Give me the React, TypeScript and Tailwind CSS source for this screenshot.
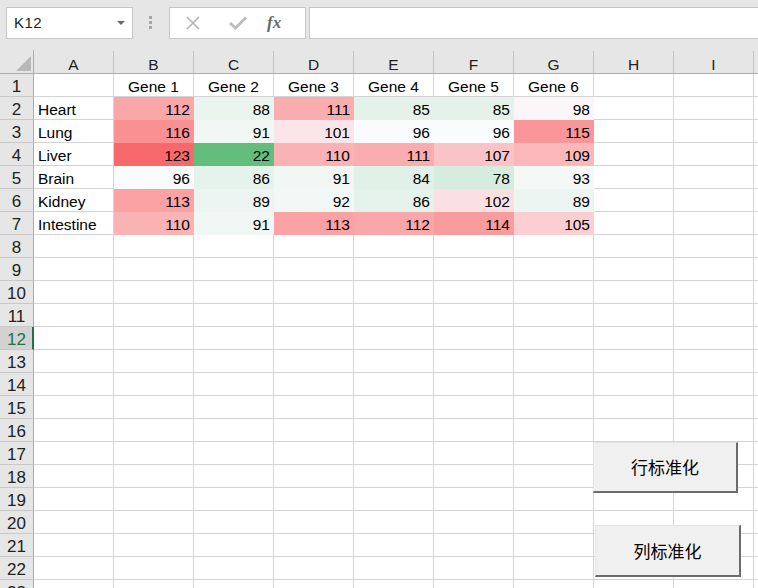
import React from 'react';

const COLS = ['A', 'B', 'C', 'D', 'E', 'F', 'G', 'H', 'I', 'J'];

const DATA: [string, number[]][] = [
  ['Heart', [112, 88, 111, 85, 85, 98]],
  ['Lung', [116, 91, 101, 96, 96, 115]],
  ['Liver', [123, 22, 110, 111, 107, 109]],
  ['Brain', [96, 86, 91, 84, 78, 93]],
  ['Kidney', [113, 89, 92, 86, 102, 89]],
  ['Intestine', [110, 91, 113, 112, 114, 105]],
];

// Excel green-white-red 3-colour scale (min / 50th percentile / max)
const MIN = 22;
const MID = 97;
const MAX = 123;
const GREEN = [99, 190, 123];
const WHITE = [252, 252, 255];
const RED = [248, 105, 107];

function heat(v: number) {
  let to = WHITE;
  let t = 0;
  if (v >= MID) {
    to = RED;
    t = (v - MID) / (MAX - MID);
  } else {
    to = GREEN;
    t = (MID - v) / (MID - MIN);
  }
  const c = WHITE.map((w, i) => Math.round(w + (to[i] - w) * t));
  return `rgb(${c[0]}, ${c[1]}, ${c[2]})`;
}

function Cell({
  children,
  align = 'left',
  fill,
}: {
  children?: React.ReactNode;
  align?: 'left' | 'right' | 'center';
  fill?: string;
}) {
  const justify =
    align === 'right' ? 'justify-end pr-[3px]' : align === 'center' ? 'justify-center' : 'justify-start pl-[4px]';
  return (
    <div
      className={`flex h-[23px] w-[80px] shrink-0 items-end border-r border-b border-[#d4d4d4] text-[15.5px] leading-[19px] text-black ${justify}`}
      style={fill ? { backgroundColor: fill, borderColor: fill } : undefined}
    >
      {children}
    </div>
  );
}

function RowHead({ n, active }: { n: number; active?: boolean }) {
  return (
    <div
      className={`flex h-[23px] w-[34px] shrink-0 items-end justify-center border-b border-[#c8c8c8] text-[17px] leading-[18px] ${
        active
          ? 'border-r-2 border-r-[#217346] bg-[#d2d2d2] pl-[1px] text-[#217346]'
          : 'border-r border-r-[#ababab] bg-[#e6e6e6] text-[#222]'
      }`}
    >
      {n}
    </div>
  );
}

function FormulaBar() {
  return (
    <div className="flex h-[50px] items-start bg-[#e6e6e6] pt-[7px]">
      <div className="ml-[6px] flex h-[32px] w-[127px] items-center justify-between border border-[#c6c6c6] bg-white pl-[7px] pr-[7px]">
        <span className="text-[15px] tracking-[0.5px] text-[#222]">K12</span>
        <span className="h-0 w-0 border-x-[4px] border-t-[4px] border-x-transparent border-t-[#6b6b6b]" />
      </div>
      <div className="ml-[16px] mt-[9px] flex flex-col gap-[2px]">
        <span className="h-[3px] w-[3px] bg-[#a6a6a6]" />
        <span className="h-[3px] w-[3px] bg-[#a6a6a6]" />
        <span className="h-[3px] w-[3px] bg-[#a6a6a6]" />
      </div>
      <div className="ml-[17px] flex h-[32px] w-[137px] items-center border border-[#c6c6c6] bg-white">
        <svg width="16" height="16" viewBox="0 0 16 16" className="ml-[15px]">
          <path d="M2 2 L14 14 M14 2 L2 14" stroke="#b3b3b3" strokeWidth="1.6" fill="none" />
        </svg>
        <svg width="18" height="14" viewBox="0 0 18 14" className="ml-[28px]">
          <path d="M1 7 L6.5 12 L17 1.5" stroke="#bdbdbd" strokeWidth="3" fill="none" />
        </svg>
        <span className="ml-[20px] font-['Liberation_Serif',serif] text-[17px] font-bold italic text-[#6a6a6a]">
          fx
        </span>
      </div>
      <div className="ml-[3px] h-[32px] flex-1 border border-r-0 border-[#c6c6c6] bg-white" />
    </div>
  );
}

function ColumnHeader() {
  return (
    <div className="flex h-[24px] bg-[#e6e6e6]">
      <div className="relative w-[34px] shrink-0 border-r border-b border-[#ababab]">
        <svg width="15" height="15" viewBox="0 0 15 15" className="absolute left-[16px] top-[6px]">
          <path d="M15 0 L15 15 L0 15 Z" fill="#b8b8b8" />
        </svg>
      </div>
      {COLS.map((c) => (
        <div
          key={c}
          className="flex w-[80px] shrink-0 items-end justify-center border-b border-b-[#ababab] text-[15.5px] leading-[17px] text-[#222]"
        >
          <div className="flex-1 text-center">{c === 'J' ? '' : c}</div>
          <div className="h-[22px] w-px bg-[#c4c4c4]" />
        </div>
      ))}
    </div>
  );
}

function WinButton({ label, className }: { label: string; className: string }) {
  return (
    <button
      className={`absolute flex items-center justify-center border-t border-l border-t-[#e3e3e3] border-l-[#e3e3e3] border-r-2 border-b-2 border-r-[#6b6b6b] border-b-[#6b6b6b] bg-[#f0f0f0] font-['Noto_Sans_CJK_SC',sans-serif] text-[17px] text-black ${className}`}
    >
      {label}
    </button>
  );
}

export default function App() {
  const rows = Array.from({ length: 23 }, (_, i) => i + 1);

  return (
    <div className="relative h-[588px] w-[758px] overflow-hidden bg-white font-['Liberation_Sans','Noto_Sans_CJK_SC',sans-serif]">
      <FormulaBar />
      <ColumnHeader />

      {rows.map((r) => {
        const cells: React.ReactNode[] = [];
        if (r === 1) {
          cells.push(<Cell key="A" />);
          for (let g = 1; g <= 6; g++) {
            cells.push(
              <Cell key={g} align="center">
                Gene {g}
              </Cell>
            );
          }
        } else if (r <= 7) {
          const [name, vals] = DATA[r - 2];
          cells.push(<Cell key="A">{name}</Cell>);
          vals.forEach((v, i) =>
            cells.push(
              <Cell key={i} align="right" fill={heat(v)}>
                {v}
              </Cell>
            )
          );
        } else {
          for (let i = 0; i < 7; i++) cells.push(<Cell key={i} />);
        }
        for (let i = 7; i < COLS.length; i++) cells.push(<Cell key={`e${i}`} />);

        return (
          <div key={r} className="flex">
            <RowHead n={r} active={r === 12} />
            {cells}
          </div>
        );
      })}

      <WinButton label="行标准化" className="left-[593px] top-[442px] h-[51px] w-[145px]" />
      <WinButton label="列标准化" className="left-[595px] top-[525px] h-[52px] w-[146px]" />
    </div>
  );
}
